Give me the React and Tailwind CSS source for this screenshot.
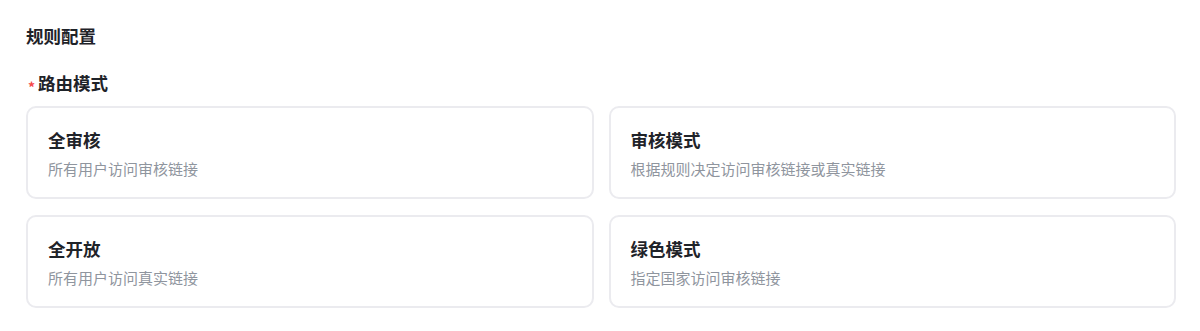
export default function App() {
  const cards = [
    { t: "全审核", d: "所有用户访问审核链接" },
    { t: "审核模式", d: "根据规则决定访问审核链接或真实链接" },
    { t: "全开放", d: "所有用户访问真实链接" },
    { t: "绿色模式", d: "指定国家访问审核链接" },
  ];
  return (
    <div
      className="w-[1200px] h-[331px] bg-white pl-[26px] pr-[24px] pt-[24px]"
      style={{ fontFamily: '"Noto Sans CJK SC", "Noto Sans", sans-serif' }}
    >
      <div className="text-[17.5px] leading-[24px] font-semibold text-[#1f2329]">规则配置</div>
      <div className="mt-[23px] flex items-center h-[24px] text-[17.5px] font-semibold text-[#1f2329]">
        <span className="text-[#f5484a] text-[14px] mr-[3px] ml-[2px] mt-[7px] leading-none">*</span>
        <span className="leading-[24px]">路由模式</span>
      </div>
      <div className="mt-[11px] grid grid-cols-2 gap-x-[15px] gap-y-[16px]">
        {cards.map((c) => (
          <div
            key={c.t}
            className="h-[93px] rounded-[10px] border-2 border-[#ebebef] px-[20px] pt-[19px]"
          >
            <div className="text-[17.5px] leading-[25px] font-semibold text-[#1f2329]">{c.t}</div>
            <div className="mt-[6px] text-[15px] leading-[21px] text-[#8f959e]">{c.d}</div>
          </div>
        ))}
      </div>
    </div>
  );
}
